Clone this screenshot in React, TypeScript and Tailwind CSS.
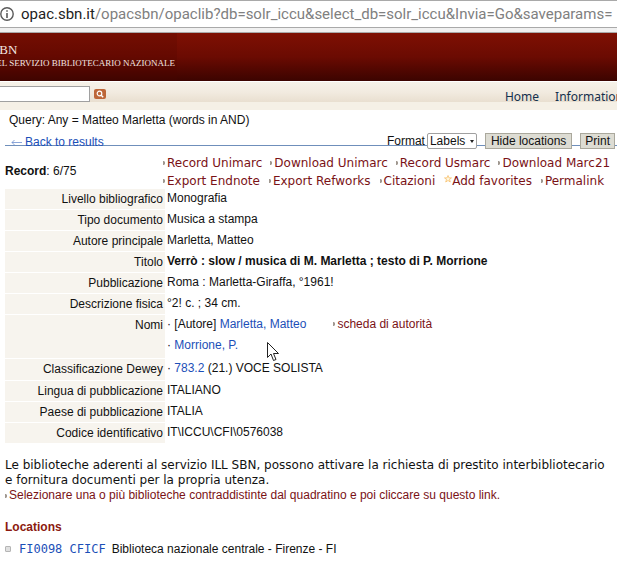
import type { ReactNode } from 'react'

interface RecordRow {
  label: string
  value: ReactNode
}

function Bullet() {
  return (
    <svg viewBox="0 0 4 12" className="h-3 w-1 shrink-0" aria-hidden="true">
      <path d="M0 4v4h1l1-1V5L1 4z" fill="#a09890" />
    </svg>
  )
}

function ActionLink({ children, star = false }: { children: ReactNode; star?: boolean }) {
  return (
    <a href="#" className="flex items-center whitespace-nowrap">
      {star ? (
        <svg viewBox="0 0 8 12" className="h-3 w-2 shrink-0" aria-hidden="true">
          <path d="M4 0.500l1 2.400h2.500l-2 1.600.8 2.500L4 5.500 1.700 7l.8-2.500-2-1.600H3z" fill="#fff6dc" stroke="#f6b95c" strokeWidth="0.700" />
        </svg>
      ) : (
        <Bullet />
      )}
      {children}
    </a>
  )
}

const rows: RecordRow[] = [
  { label: 'Livello bibliografico', value: 'Monografia' },
  { label: 'Tipo documento', value: 'Musica a stampa' },
  { label: 'Autore principale', value: 'Marletta, Matteo' },
  { label: 'Titolo', value: <b>Verrò : slow / musica di M. Marletta ; testo di P. Morrione</b> },
  { label: 'Pubblicazione', value: 'Roma : Marletta-Giraffa, °1961!' },
  { label: 'Descrizione fisica', value: '°2! c. ; 34 cm.' },
  {
    label: 'Nomi',
    value: (
      <>
        <div className="flex h-[21px]">
          <span className="whitespace-pre">· [Autore] </span>
          <a href="#" className="text-[#1c4fb8]">Marletta, Matteo</a>
          <a href="#" className="ml-[27px] flex items-center self-start text-[#7a1216]">
            <Bullet />
            scheda di autorità
          </a>
        </div>
        <div className="h-[22px]">
          · <a href="#" className="text-[#1c4fb8]">Morrione, P.</a>
        </div>
      </>
    ),
  },
  {
    label: 'Classificazione Dewey',
    value: (
      <div className="h-[21px]">
        · <a href="#" className="text-[#1c4fb8]">783.2</a> (21.) VOCE SOLISTA
      </div>
    ),
  },
  { label: 'Lingua di pubblicazione', value: 'ITALIANO' },
  { label: 'Paese di pubblicazione', value: 'ITALIA' },
  { label: 'Codice identificativo', value: 'IT\\ICCU\\CFI\\0576038' },
]

function AddressBar() {
  return (
    <div className="border-b border-[#a9a9a9] bg-[#f0f0f0] pb-1">
      <div className="flex h-7 items-center overflow-hidden border-y border-[#a9a9a9] bg-white">
        <svg viewBox="0 0 14 14" className="size-[14px] shrink-0" aria-hidden="true">
          <circle cx="7" cy="7" r="6.200" fill="none" stroke="#5a5a5a" strokeWidth="1.400" />
          <path d="M6.200 3.200h1.600v1.600H6.200zM6.200 6h1.600v5H6.200z" fill="#5a5a5a" />
        </svg>
        <div className="ml-[7px] font-[Roboto,sans-serif] text-[15px] whitespace-nowrap text-[#808080]">
          <span className="text-[#222]">opac.sbn.it</span>
          /opacsbn/opaclib?db=solr_iccu&amp;select_db=solr_iccu&amp;Invia=Go&amp;saveparams=
        </div>
      </div>
    </div>
  )
}

function Banner() {
  return (
    <header className="h-12 overflow-hidden bg-linear-to-b from-[#7f1003] via-[#6b0b02] to-[#3c0400] font-['Liberation_Serif',serif] text-[#f3e6e0]">
      <div className="flex h-full w-[177px] flex-col bg-[#4a0400]/20 pt-2">
        <div className="-ml-2 text-[13px] leading-[18px]">SBN</div>
        <div className="flex justify-end pr-[2px] text-[9px] leading-2 whitespace-nowrap">DEL SERVIZIO BIBLIOTECARIO NAZIONALE</div>
      </div>
    </header>
  )
}

function SearchBar() {
  return (
    <div className="border-t border-white bg-[#f5f0e6] pb-2">
      <div className="flex h-5 items-start overflow-visible bg-linear-to-b from-[#f6f2e9] via-[#f2ebe0] to-[#e9dfd0]">
        <form className="flex items-center pt-1" onSubmit={(e) => e.preventDefault()}>
          <input type="text" aria-label="Search" className="-ml-1 h-4 w-[94px] border border-[#a0a0a0] bg-white" />
          <button type="submit" aria-label="Go" className="ml-1 flex h-[10px] w-3 items-center justify-center rounded-xs bg-[#bd6638]">
            <svg viewBox="0 0 12 10" className="h-[10px] w-3" aria-hidden="true">
              <circle cx="5.500" cy="4.500" r="2.300" fill="none" stroke="#fff" strokeWidth="1.200" />
              <path d="M7.200 6.200L9.200 8.200" stroke="#fff" strokeWidth="1.400" />
            </svg>
          </button>
        </form>
        <nav className="-mr-[6px] ml-auto flex gap-4 pt-[6px] font-['Noto_Sans',sans-serif] text-[12px] leading-[18px] text-[#14304d]">
          <a href="#">Home</a>
          <a href="#">Information</a>
        </nav>
      </div>
    </div>
  )
}

function Toolbar() {
  return (
    <div className="relative -mr-2 flex h-6 items-start justify-between">
      <hr className="absolute inset-x-0 top-[13px] border-[#6f8fbb]" />
      <a href="#" className="relative ml-[6px] flex items-center pt-[2px] leading-4 text-[#1c4fb8]">
        <svg viewBox="0 0 12 8" className="mr-[2px] h-2 w-3" aria-hidden="true">
          <path d="M11 4.500H1M3.500 2L1 4.500L3.500 7" fill="none" stroke="#5a80c8" strokeWidth="0.700" />
        </svg>
        Back to results
      </a>
      <div className="relative mr-2 flex items-center pt-px leading-4">
        <label htmlFor="format" className="pr-[2px]">Format</label>
        <div className="relative mr-2">
          <select id="format" defaultValue="Labels" className="block h-4 w-[50px] appearance-none rounded-xs border border-[#a0a0a0] bg-white pl-[2px] leading-[14px]">
            <option>Labels</option>
          </select>
          <svg viewBox="0 0 4 3" className="pointer-events-none absolute top-[7px] right-[3px] h-[3px] w-1" aria-hidden="true">
            <path d="M0 0h4L2 3z" fill="#222" />
          </svg>
        </div>
        <button type="button" className="mr-2 h-4 border border-[#aaa89c] bg-[#dddcd3] px-[5px] leading-[14px]">Hide locations</button>
        <button type="button" className="h-4 border border-[#aaa89c] bg-[#dddcd3] px-1 leading-[14px]">Print</button>
      </div>
    </div>
  )
}

export default function App() {
  return (
    <div className="overflow-hidden bg-white font-['Liberation_Sans',Arial,sans-serif] text-[12px] text-[#111]">
      <AddressBar />
      <Banner />
      <SearchBar />

      <main className="pr-[2px] pl-[5px]">
        <p className="pt-[2px] pb-1 pl-1 leading-4">Query: Any = Matteo Marletta (words in AND)</p>
        <Toolbar />

        <div className="flex items-start pb-px">
          <p className="w-[158px] shrink-0 pt-[7px] leading-4">
            <b>Record</b>: 6/75
          </p>
          <div className="flex flex-col gap-1 font-['DejaVu_Sans',sans-serif] text-[12px] leading-[14px] whitespace-nowrap text-[#7a1216]">
            <div className="flex gap-2">
              <ActionLink>Record Unimarc</ActionLink>
              <ActionLink>Download Unimarc</ActionLink>
              <ActionLink>Record Usmarc</ActionLink>
              <ActionLink>Download Marc21</ActionLink>
            </div>
            <div className="flex gap-[9px]">
              <ActionLink>Export Endnote</ActionLink>
              <ActionLink>Export Refworks</ActionLink>
              <ActionLink>Citazioni</ActionLink>
              <ActionLink star>Add favorites</ActionLink>
              <ActionLink>Permalink</ActionLink>
            </div>
          </div>
        </div>

        <table className="w-full border-separate border-spacing-0 leading-4">
          <tbody>
            {rows.map((row) => (
              <tr key={row.label}>
                <th scope="row" className="h-[21px] w-40 border-b border-white bg-[#f7f4ee] pt-[2px] pr-[2px] text-right align-top font-normal">
                  {row.label}
                </th>
                <td className="pt-px pl-[2px] align-top">{row.value}</td>
              </tr>
            ))}
          </tbody>
        </table>

        <p className="pt-[14px] font-['DejaVu_Sans',sans-serif] text-[12px] leading-[15px]">
          Le biblioteche aderenti al servizio ILL SBN, possono attivare la richiesta di prestito interbibliotecario
          <br />e fornitura documenti per la propria utenza.
        </p>
        <a href="#" className="flex items-center leading-[15px] text-[#7a1216]">
          <Bullet />
          Selezionare una o più biblioteche contraddistinte dal quadratino e poi cliccare su questo link.
        </a>

        <h2 className="pt-4 leading-4 font-bold text-[#8b1a10]">Locations</h2>
        <div className="flex items-center pt-[6px] pb-4 leading-4">
          <input type="checkbox" id="fi0098" className="size-[6px] appearance-none rounded-[1px] border border-[#b5b5b5] bg-[#e0e0e0]" />
          <label htmlFor="fi0098" className="flex items-center pl-2">
            <a href="#" className="font-['DejaVu_Sans_Mono',monospace] text-[12px] text-[#1c4fb8]">FI0098 CFICF</a>
            <span className="pl-[6px]">Biblioteca nazionale centrale - Firenze - FI</span>
          </label>
        </div>
      </main>

      <svg viewBox="0 0 12 20" className="absolute top-[342px] left-[267px] h-5 w-3" aria-hidden="true">
        <path d="M0.500 0.500V15.500L4 12L6.500 18.500L9 17.500L6.500 11.500H11.500z" fill="#fff" stroke="#222" />
      </svg>
    </div>
  )
}
